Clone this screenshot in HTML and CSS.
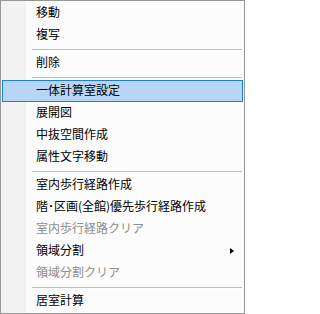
FILE: index.html
```html
<!DOCTYPE html>
<html lang="ja">
<head>
<meta charset="utf-8">
<link rel="stylesheet" href="styles.css">
</head>
<body>
<div class="menu">
  <div class="item">移動</div>
  <div class="item">複写</div>
  <div class="sep"></div>
  <div class="item">削除</div>
  <div class="sep"></div>
  <div class="item active">一体計算室設定</div>
  <div class="item">展開図</div>
  <div class="item">中抜空間作成</div>
  <div class="item">属性文字移動</div>
  <div class="sep"></div>
  <div class="item">室内歩行経路作成</div>
  <div class="item">階･区画(全館)優先歩行経路作成</div>
  <div class="item disabled">室内歩行経路クリア</div>
  <div class="item">領域分割<span class="arrow"></span></div>
  <div class="item disabled">領域分割クリア</div>
  <div class="sep"></div>
  <div class="item">居室計算</div>
</div>
</body>
</html>
```
FILE: styles.css
```css
html, body {
  margin: 0;
  padding: 0;
  background: #ffffff;
}

.menu {
  box-sizing: border-box;
  width: 245px;
  height: 314px;
  border: 1px solid #979797;
  padding: 1px;
  background: linear-gradient(to right, #f2f2f2 0, #f2f2f2 25px, #fcfcfc 25px);
  display: flex;
  flex-direction: column;
  font-family: "Noto Sans CJK JP", "Noto Sans", sans-serif;
  font-size: 12px;
  color: #000000;
}

.item {
  box-sizing: border-box;
  height: 22px;
  border: 1px solid transparent;
  padding-left: 33px;
  padding-right: 8px;
  display: flex;
  align-items: center;
  justify-content: space-between;
  line-height: 1;
  white-space: nowrap;
  padding-bottom: 2px;
}

.item.active {
  background: #b7d6f6;
  border-color: #1b7fd6;
}

.item.disabled {
  color: #8d8d8d;
}

.sep {
  height: 6px;
  margin-left: 30px;
  margin-right: 1px;
  background: linear-gradient(to bottom, transparent 0, transparent 3px, #bdbdbd 3px, #bdbdbd 4px, #ffffff 4px, #ffffff 5px, transparent 5px);
}

.arrow {
  width: 0;
  height: 0;
  border-left: 4px solid #000000;
  border-top: 3.5px solid transparent;
  border-bottom: 3.5px solid transparent;
  margin-top: 2px;
}
```
